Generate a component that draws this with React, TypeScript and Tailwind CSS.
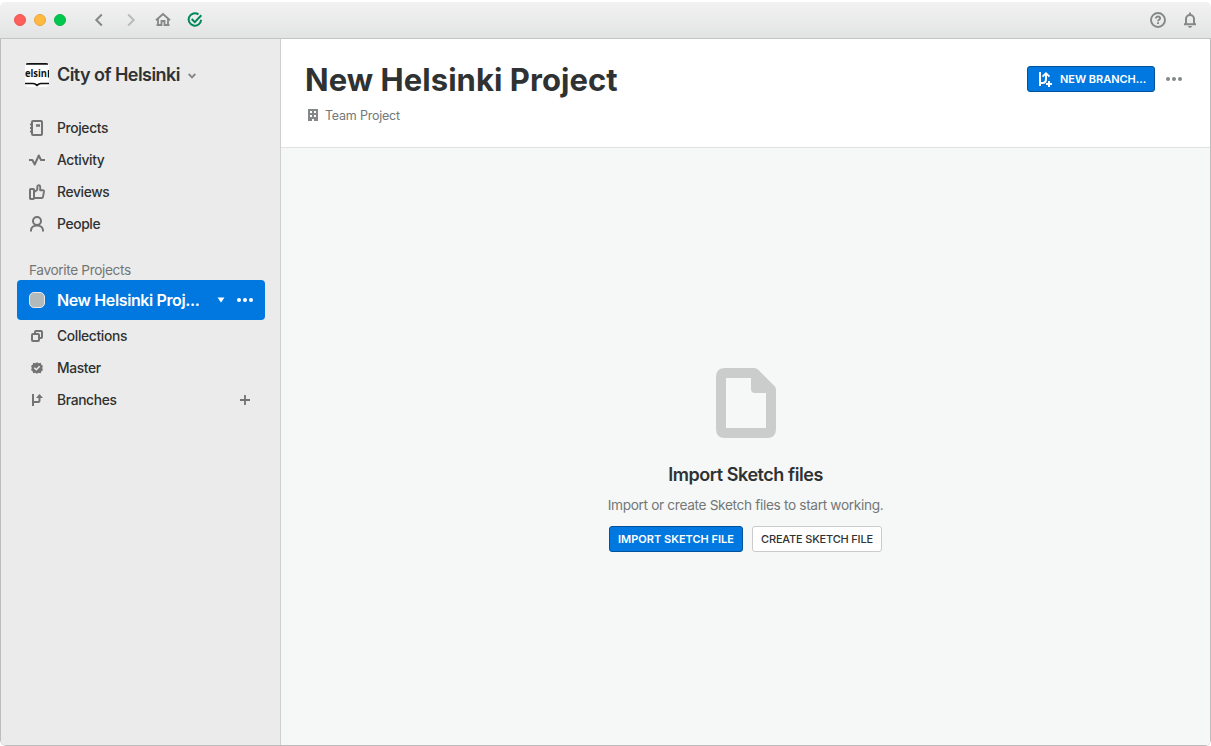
import type { ReactNode } from "react";

const Svg = ({ w = 16, h = 16, className = "", children }: { w?: number; h?: number; className?: string; children: ReactNode }) => (
  <svg width={w} height={h} viewBox={`0 0 ${w} ${h}`} fill="none" stroke="currentColor" strokeWidth="2" className={`block shrink-0 ${className}`}>
    {children}
  </svg>
);

const ProjectsIcon = () => (
  <Svg>
    <rect x="3" y="1" width="10" height="14" rx="1" />
    <path d="M1 4.500h3M1 8h3M1 11.500h3" strokeWidth="1.800" />
    <path d="M7 5.500h4" strokeWidth="2.600" />
  </Svg>
);
const ActivityIcon = () => (
  <Svg>
    <path d="M0 8h3.400l2.300 4.500L9.800 3.500 12 8h4" strokeWidth="2" strokeLinejoin="round" />
  </Svg>
);
const ReviewsIcon = () => (
  <Svg>
    <rect x="1" y="5" width="4" height="10" rx="0.800" />
    <path d="M5 8.200 8.300 5.800V2.700c0-1.900 2.700-2 2.900 0V6.200H14c.7 0 1.100.5 1 1.200l-1 5.400c-.1.700-.6 1.200-1.200 1.200H5" strokeWidth="1.900" strokeLinejoin="round" />
  </Svg>
);
const PeopleIcon = () => (
  <Svg>
    <circle cx="8" cy="5" r="4" />
    <path d="M2 15.500v-1C2 11.500 4.500 9.500 8 9.500s6 2 6 5v1" />
  </Svg>
);
const CollectionsIcon = () => (
  <Svg>
    <rect x="3" y="6" width="7" height="7" rx="1" />
    <path d="M6 6V4c0-.6.4-1 1-1h5c.6 0 1 .4 1 1v5c0 .6-.4 1-1 1h-2" />
  </Svg>
);
const MasterIcon = () => (
  <Svg>
    <path d="M8 2.300 9.700 3.200 11.700 2.800 12.400 4.700 14 5.900 13.200 8 14 10.100 12.400 11.300 11.700 13.200 9.700 12.800 8 13.700 6.300 12.800 4.300 13.200 3.600 11.300 2 10.100 2.800 8 2 5.900 3.600 4.700 4.300 2.800 6.300 3.200Z" fill="currentColor" stroke="none" />
    <path d="m5.300 7.700 2 2 3.400-3.500" stroke="#ebebeb" strokeWidth="1.500" />
  </Svg>
);
const BranchesIcon = () => (
  <Svg>
    <path d="M4 2v12" />
    <path d="M4 10h5c.9 0 1.500-.6 1.500-1.500V4" strokeWidth="2" />
    <path d="M7 6 10.500 2l3.500 4z" fill="currentColor" stroke="none" />
  </Svg>
);
const Dots = ({ gap, r, className = "" }: { gap: number; r: number; className?: string }) => (
  <Svg className={className}>
    <g fill="currentColor" stroke="none">
      <circle cx={8 - gap} cy="8" r={r} />
      <circle cx="8" cy="8" r={r} />
      <circle cx={8 + gap} cy="8" r={r} />
    </g>
  </Svg>
);

const NavRow = ({ icon, children, action }: { icon: ReactNode; children: ReactNode; action?: ReactNode }) => (
  <li className="flex h-8 items-center pl-3 pr-3 text-[#737373]">
    {icon}
    <span className="ml-3 flex-1 text-[13.800px] font-[450] leading-8 tracking-[-0.340px] text-[#2f3130]">{children}</span>
    {action}
  </li>
);

export default function App() {
  return (
    <div className="h-[746px] w-[1211px] bg-white font-['Inter',sans-serif] text-[#2f3232]">
      <div className="flex h-full flex-col overflow-hidden rounded-[6px]">
        <header className="mt-[2px] flex h-[37px] shrink-0 items-center rounded-t-[5px] border-b border-[#c4c4c4] bg-gradient-to-b from-[#f2f2f2] to-[#e2e4e3] pl-[14px] pr-[13px] text-[#858888]">
          <div className="flex gap-2">
            <span className="size-3 rounded-full border border-[#ec5450] bg-[#ff5f5a]" />
            <span className="size-3 rounded-full border border-[#eba73a] bg-[#ffb940]" />
            <span className="size-3 rounded-full border border-[#08b545] bg-[#00c84f]" />
          </div>
          <div className="ml-[25px] flex gap-4">
            <Svg><path d="M10.800 2.500 5.300 8l5.500 5.500" /></Svg>
            <Svg className="text-[#b9bbbb]"><path d="m5.200 2.500 5.500 5.500-5.500 5.500" /></Svg>
            <Svg>
              <path d="M1 8.300 8 2l7 6.300" strokeWidth="1.900" />
              <path d="M3 7v6.200h3.500V9h3v4.200H13V7" strokeWidth="1.800" />
              <path d="M1.500 13.200h5M9.500 13.200h5" strokeWidth="1.700" />
            </Svg>
            <Svg className="text-[#00875a]">
              <path d="M11.500 2.400A6.200 6.200 0 1 0 14.100 7.800" />
              <path d="m4.700 7 3.100 3.100 6.500-6.800" />
            </Svg>
          </div>
          <div className="ml-auto flex gap-4">
            <Svg>
              <circle cx="8" cy="8" r="7" strokeWidth="1.900" />
              <path d="M5.900 6.500c0-2.800 4.400-2.600 4.200-.1C10 7.800 8 7.700 8 9.300" strokeWidth="1.900" />
              <path d="M8 10.300v1.700" strokeWidth="2" />
            </Svg>
            <Svg>
              <path d="M4 12V7c0-2.300 1.700-4 4-4s4 1.700 4 4v5" />
              <path d="M2 12.200h12M8 .5V3" strokeWidth="1.900" />
              <path d="M6 14h4c-.3 1.100-1 1.800-2 1.800S6.300 15.100 6 14Z" fill="currentColor" stroke="none" />
            </Svg>
          </div>
        </header>

        <div className="flex min-h-0 flex-1 overflow-hidden rounded-b-[5px] border-x border-b border-[#bdbdbd]">
          <aside className="flex w-[280px] shrink-0 flex-col border-r border-[#cfcfcf] bg-[#ebebeb] pl-4 pr-[15px]">
            <div className="mt-6 flex h-6 items-center pl-2">
              <Svg w={24} h={24} className="rounded-[3px]">
                <rect width="24" height="24" rx="3" fill="#fff" stroke="none" />
                <path d="M1 .8h22" stroke="#111" strokeWidth="1.800" />
                <text x="0" y="14.400" textLength="22" lengthAdjust="spacingAndGlyphs" fill="#111" stroke="none" className="font-['Open_Sans',sans-serif] text-[10px] font-bold">elsin</text>
                <path d="M23.400 7v7.400" stroke="#111" strokeWidth="1.200" />
                <path d="M0 20.500h8c2 0 3 .8 4 1.800 1-1 2-1.800 4-1.800h8" stroke="#111" strokeWidth="1.700" />
              </Svg>
              <span className="ml-2 pb-[2px] text-[18px] font-semibold tracking-[-0.550px]">City of Helsinki</span>
              <Svg w={8} h={6} className="ml-2 mt-px text-[#858888]"><path d="m.7 1 3.300 3.300L7.300 1" strokeWidth="1.900" /></Svg>
            </div>
            <ul className="mt-[25px]">
              <NavRow icon={<ProjectsIcon />}>Projects</NavRow>
              <NavRow icon={<ActivityIcon />}>Activity</NavRow>
              <NavRow icon={<ReviewsIcon />}>Reviews</NavRow>
              <NavRow icon={<PeopleIcon />}>People</NavRow>
            </ul>
            <h2 className="mt-5 h-5 pl-3 text-[13.700px] leading-5 tracking-[-0.380px] text-[#737675]">Favorite Projects</h2>
            <div className="flex h-10 items-center rounded-[4px] bg-[#0078e0] px-3 text-white">
              <span className="size-4 shrink-0 rounded-[5px] border border-[#e8e8e8] bg-[#b4babc]" />
              <span className="ml-3 flex-1 whitespace-nowrap text-[16px] font-semibold tracking-[-0.380px]">New Helsinki Proj...</span>
              <Svg w={8} h={6} className="mr-3"><path d="M.5.500h7L4 5.500z" fill="currentColor" stroke="none" /></Svg>
              <Dots gap={6} r={2} />
            </div>
            <ul>
              <NavRow icon={<CollectionsIcon />}>Collections</NavRow>
              <NavRow icon={<MasterIcon />}>Master</NavRow>
              <NavRow icon={<BranchesIcon />} action={<Svg><path d="M8 3v10M3 8h10" strokeWidth="1.800" /></Svg>}>Branches</NavRow>
            </ul>
          </aside>

          <main className="flex flex-1 flex-col bg-[#f6f8f7]">
            <div className="flex h-[109px] shrink-0 justify-between border-b border-[#dfe2e1] bg-white pl-6 pr-7">
              <div>
                <h1 className="mt-[21px] h-10 whitespace-nowrap text-[31px] font-bold leading-10 tracking-[0.050px]">New Helsinki Project</h1>
                <div className="mt-[6px] flex h-5 items-center pl-[3px] text-[12.500px] text-[#737777]">
                  <Svg w={10} h={12} className="-mt-[2px] text-[#858888]">
                    <path fillRule="evenodd" fill="currentColor" stroke="none" d="M0 0h10v12H6V10H4v2H0ZM2 2v2h2V2ZM6 2v2h2V2ZM2 6v2h2V6ZM6 6v2h2V6Z" />
                  </Svg>
                  <span className="ml-[7px] tracking-[-0.220px]">Team Project</span>
                </div>
              </div>
              <div className="mt-[27px] flex h-[26px] items-center">
                <button className="flex h-[26px] w-32 items-center rounded-[3px] border border-[#00529c] bg-[#0078e0] pl-[9px] text-[11px] font-semibold text-white">
                  <Svg w={16} h={18} className="mt-px">
                    <path d="M3 1v14" />
                    <path d="M3 12h2.500C8 12 9 10.500 9 8V3" strokeWidth="2" />
                    <path d="M5.500 5.700 9 2.200l3.500 3.500" strokeWidth="1.800" />
                    <path d="M12 10v6M9 13h6" strokeWidth="2" />
                  </Svg>
                  <span className="ml-[7px] whitespace-nowrap tracking-[-0.040px]">NEW BRANCH...</span>
                </button>
                <Dots gap={6} r={2} className="ml-[11px] text-[#858888]" />
              </div>
            </div>

            <section className="flex flex-1 flex-col items-center pt-[220px]">
              <Svg w={60} h={70} className="text-[#cacdcc]">
                <path fillRule="evenodd" fill="currentColor" stroke="none" d="M9 0H38.500Q40.500 0 42 1.500L58.500 18Q60 19.500 60 21.500V61Q60 70 51 70H9Q0 70 0 61V9Q0 0 9 0ZM10 10V60H50V25H39Q35 25 35 21V10Z" />
              </Svg>
              <h2 className="mt-[25px] h-6 text-[18px] font-semibold leading-6 tracking-[-0.450px]">Import Sketch files</h2>
              <p className="mt-2 h-5 text-[13.700px] leading-5 tracking-[-0.350px] text-[#737777]">Import or create Sketch files to start working.</p>
              <div className="mt-[11px] flex gap-[9px] text-[11px]">
                <button className="h-[26px] w-[134px] whitespace-nowrap rounded-[3px] border border-[#00529c] bg-[#0078e0] font-semibold text-white">IMPORT SKETCH FILE</button>
                <button className="h-[26px] w-[130px] whitespace-nowrap rounded-[3px] border border-[#c9cccb] bg-white font-medium tracking-[-0.180px]">CREATE SKETCH FILE</button>
              </div>
            </section>
          </main>
        </div>
      </div>
    </div>
  );
}
